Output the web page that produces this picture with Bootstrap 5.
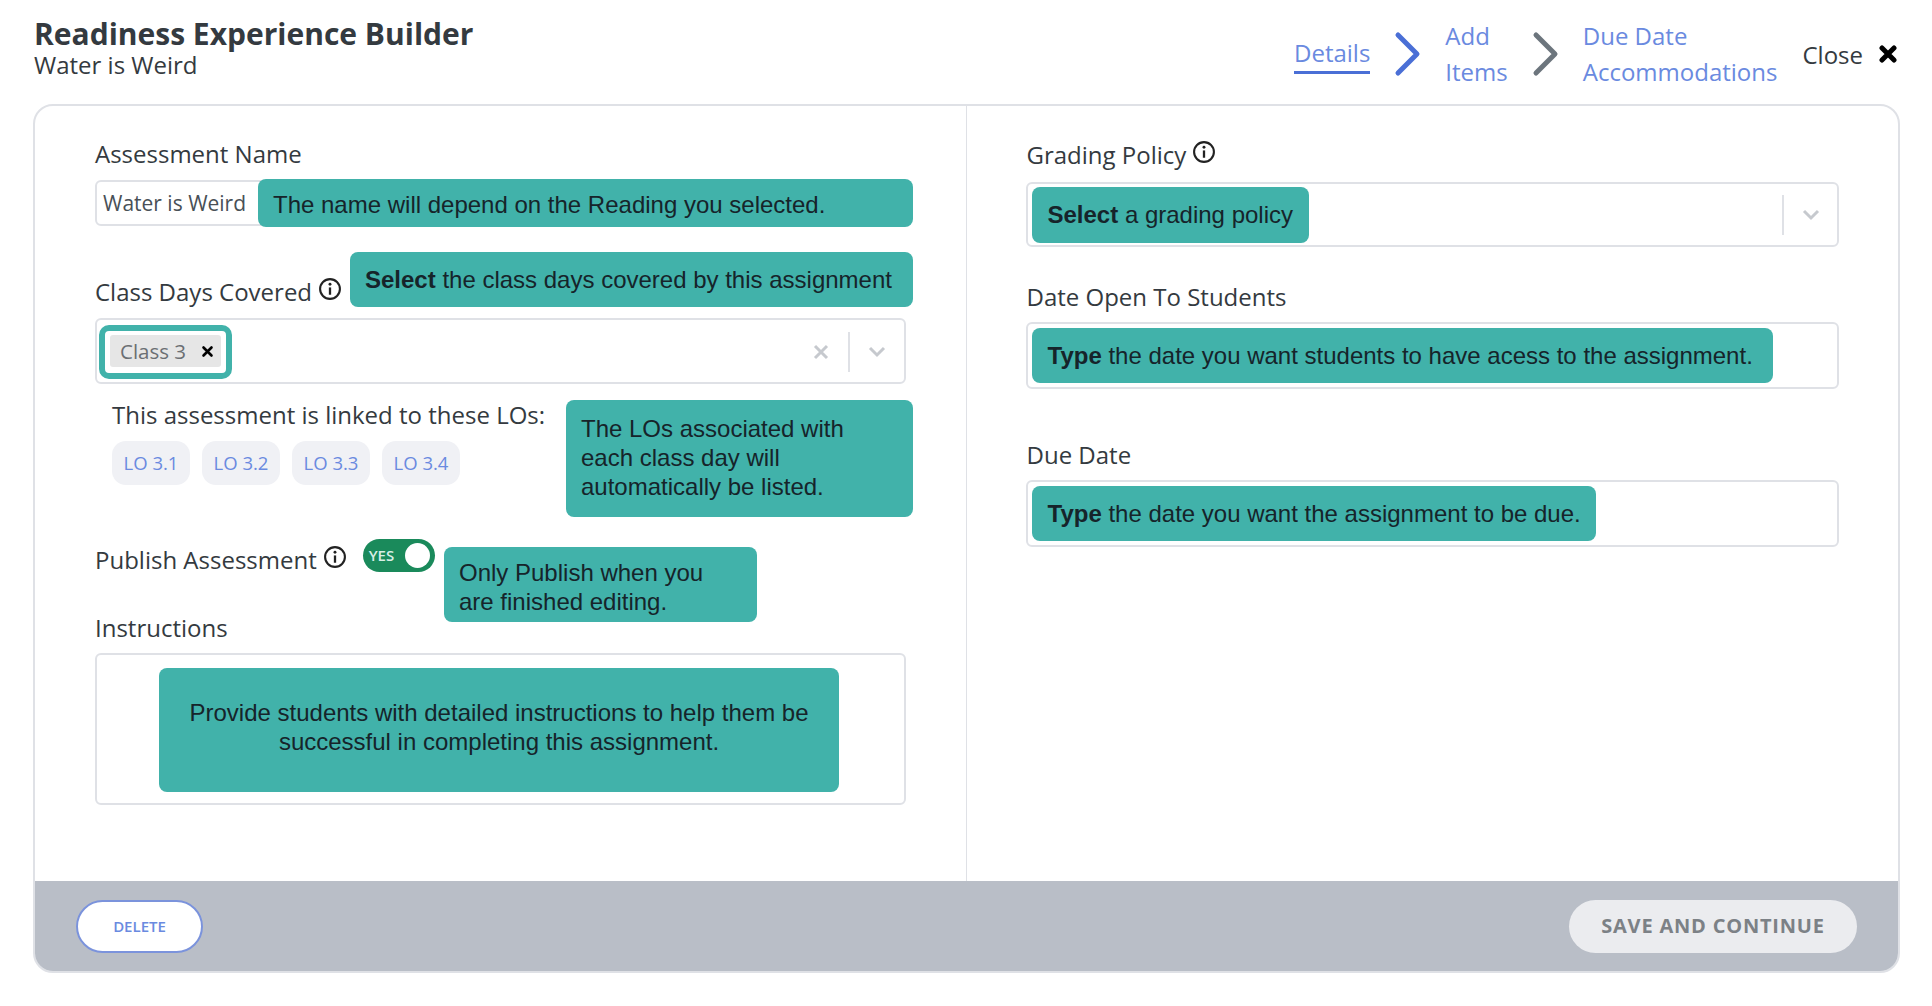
<!DOCTYPE html>
<html lang="en">
<head>
<meta charset="utf-8">
<title>Readiness Experience Builder</title>
<link href="https://cdn.jsdelivr.net/npm/bootstrap@5.3.0/dist/css/bootstrap.min.css" rel="stylesheet">
<style>
body{font-family:"Open Sans","Noto Sans",sans-serif;font-size:24px;color:#343a40;background:#fff;overflow:hidden}
.page-wrap{padding:0 32px 0 33px}
.top-bar{height:104px;padding-top:4px}
.title-block{align-self:flex-start;margin-top:13px;margin-left:1px}
.main-title{font-size:30px;line-height:33px;font-weight:700;color:#343a40;margin:0}
.sub-title{font-size:24px;line-height:30px}
.step-link{color:#6a8ae0;line-height:36px;text-decoration:none;display:block}
.step-active{border-bottom:3px solid #4a6fd6}
.step-chev{width:28px;height:46px;margin:0 24px}
.chev-first{margin-right:23px}
.chev-second{margin-right:23px}
.close-text{line-height:36px;margin-left:25px;margin-right:16px;position:relative;top:1px}
.close-ico{margin-right:3px}
.builder-card{height:869px;border:2px solid #dfe1e6;border-radius:20px;overflow:hidden}
.builder-body{height:775px}
.col-left{border-right:1px solid #dfe1e6;padding:30px 60px 0 60px}
.col-right{padding:31px 59px 0 59px}
.col-right .field-label{padding-left:1px}
.field-label{line-height:36px;white-space:nowrap}
.info-ico{width:24px;height:24px;margin-left:6px;position:relative;top:-3px;flex:none}
.name-row{margin-top:8px;height:46px}
.text-box{border:2px solid #dfe1e6;border-radius:6px;background:#fff}
.name-input{height:46px;font-size:21px;line-height:42px;padding-left:6px;color:#495057}
.callout{background:#41b2aa;border-radius:8px;color:#16242a;font-family:"Liberation Sans",Arial,sans-serif;font-size:24px;line-height:29px;padding:0 15px;white-space:normal}
.col-right .callout{padding:0 0 0 16px;white-space:nowrap}
.callout-over{position:absolute}
.co-name{left:163px;top:-1px;width:655px;height:48px;display:flex;align-items:center;padding-top:2px}
.days-row{margin-top:48px}
.co-days{left:255px;top:-22px;width:563px;height:55px;display:flex;align-items:center}
.days-box{margin-top:8px;height:66px;padding:6px 2px 4px}
.ring{border:6px solid #41b2aa;border-radius:10px;width:133px;height:54px;padding:4px 5px}
.chip-tag{background:#e6e6e6;border-radius:3px;height:32px;font-size:20.5px;color:#6b6f73;padding-left:10px}
.chip-x{width:13px;height:13px;margin-left:15px}
.sep-line{width:2px;height:40px;background:#dfe1e6}
.pick-x{width:16px;height:16px;margin-right:19px}
.pick-chev{width:18px;height:12px;margin:0 16px 0 18px}
.lo-row{margin-top:13px;padding-left:17px}
.lo-pill{background:#f0f1f5;border-radius:14px;height:44px;width:78px;font-size:18.5px;color:#6a8ae0}
.lo-list{margin-top:8px;gap:12px}
.co-los{left:471px;top:3px;width:347px;height:117px;padding-top:14px}
.pub-row{margin-top:57px}
.toggle-on{width:72px;height:33px;border-radius:17px;background:#1a8a5b;margin-left:16px;position:relative;top:-5px;color:#d9efe5;font-size:15px;font-weight:600;padding:0 5px 0 6px}
.toggle-dot{width:25px;height:25px;border-radius:50%;background:#fff}
.co-pub{left:349px;top:5px;width:313px;height:75px;display:flex;align-items:center;padding-top:4px}
.instr-row{margin-top:32px}
.instr-box{margin-top:7px;height:152px;padding-top:13px}
.co-instr{width:680px;height:124px;padding-top:30px;margin-left:62px;text-align:center}
.builder-foot{height:90px;background:#b9bec7;padding:0 41px}
.btn-del{width:127px;height:53px;background:#fff;border:2px solid #7b93dc;border-radius:27px;color:#6a8ae0;font-size:15px;font-weight:600;padding:0;--bs-btn-hover-bg:#fff;--bs-btn-hover-color:#6a8ae0;--bs-btn-hover-border-color:#7b93dc}
.btn-save{width:288px;height:53px;background:#ebecef;border:0;border-radius:27px;color:#7c8186;font-size:20px;font-weight:700;letter-spacing:.8px;padding:0;--bs-btn-hover-bg:#ebecef;--bs-btn-hover-color:#7c8186}
.right-next{margin-top:32px}
.right-last{margin-top:48px}
.grade-box{margin-top:9px;height:65px;padding:2px 4px}
.grade-box .pick-chev{margin-right:13px}
.co-grade{height:56px;width:277px;display:flex;align-items:center}
.date-box{margin-top:7px;height:67px;padding:4px}
.co-date{height:55px;display:flex;align-items:center}
.co-w1{width:741px}
.co-w2{width:564px}
</style>
</head>
<body>
<div class="page-wrap">
  <header class="top-bar d-flex justify-content-between align-items-center">
    <div class="title-block">
      <h1 class="main-title">Readiness Experience Builder</h1>
      <div class="sub-title">Water is Weird</div>
    </div>
    <nav class="d-flex align-items-center">
      <a href="#" class="step-link step-active">Details</a>
      <svg class="step-chev chev-first" viewBox="0 0 28 46"><polyline points="4,4 23,23 4,42" fill="none" stroke="#4a6fd6" stroke-width="5" stroke-linecap="round" stroke-linejoin="round"/></svg>
      <div><a href="#" class="step-link">Add</a><a href="#" class="step-link">Items</a></div>
      <svg class="step-chev chev-second" viewBox="0 0 28 46"><polyline points="4,4 23,23 4,42" fill="none" stroke="#6c757d" stroke-width="5" stroke-linecap="round" stroke-linejoin="round"/></svg>
      <div><a href="#" class="step-link">Due Date</a><a href="#" class="step-link">Accommodations</a></div>
      <span class="close-text">Close</span>
      <svg class="close-ico" width="18" height="18" viewBox="0 0 18 18"><path d="M3 3 15 15M15 3 3 15" stroke="#000" stroke-width="5" stroke-linecap="round"/></svg>
    </nav>
  </header>

  <main class="builder-card d-flex flex-column">
    <div class="row g-0 builder-body">
      <div class="col-6 col-left">
        <div class="field-label">Assessment Name</div>
        <div class="name-row position-relative">
          <div class="text-box name-input">Water is Weird</div>
          <div class="callout callout-over co-name">The name will depend on the Reading you selected.</div>
        </div>

        <div class="days-row position-relative d-flex align-items-center field-label">
          <span>Class Days Covered</span>
          <svg class="info-ico" viewBox="0 0 23 23"><circle cx="11.5" cy="11.5" r="9.5" fill="none" stroke="#222" stroke-width="2"/><circle cx="11.5" cy="7" r="1.4" fill="#222"/><rect x="10.4" y="10" width="2.2" height="7" fill="#222"/></svg>
          <div class="callout callout-over co-days"><span><b>Select</b> the class days covered by this assignment</span></div>
        </div>
        <div class="text-box days-box d-flex align-items-center">
          <div class="ring">
            <div class="chip-tag d-flex align-items-center"><span>Class 3</span><svg class="chip-x" viewBox="0 0 13 13"><path d="M2.5 2.5 10.5 10.5M10.5 2.5 2.5 10.5" stroke="#000" stroke-width="2.6" stroke-linecap="round"/></svg></div>
          </div>
          <svg class="pick-x ms-auto" viewBox="0 0 16 16"><path d="M2 2 14 14M14 2 2 14" stroke="#c6c9ce" stroke-width="3"/></svg>
          <div class="sep-line"></div>
          <svg class="pick-chev" viewBox="0 0 18 12"><polyline points="2,2 9,9 16,2" fill="none" stroke="#c6c9ce" stroke-width="3"/></svg>
        </div>

        <div class="lo-row position-relative">
          <div class="field-label">This assessment is linked to these LOs:</div>
          <div class="d-flex lo-list">
            <span class="lo-pill d-flex align-items-center justify-content-center">LO 3.1</span>
            <span class="lo-pill d-flex align-items-center justify-content-center">LO 3.2</span>
            <span class="lo-pill d-flex align-items-center justify-content-center">LO 3.3</span>
            <span class="lo-pill d-flex align-items-center justify-content-center">LO 3.4</span>
          </div>
          <div class="callout callout-over co-los">The LOs associated with each class day will automatically be listed.</div>
        </div>

        <div class="pub-row position-relative d-flex align-items-center field-label">
          <span>Publish Assessment</span>
          <svg class="info-ico" viewBox="0 0 23 23"><circle cx="11.5" cy="11.5" r="9.5" fill="none" stroke="#222" stroke-width="2"/><circle cx="11.5" cy="7" r="1.4" fill="#222"/><rect x="10.4" y="10" width="2.2" height="7" fill="#222"/></svg>
          <div class="toggle-on d-flex align-items-center justify-content-between"><span>YES</span><span class="toggle-dot"></span></div>
          <div class="callout callout-over co-pub">Only Publish when you are finished editing.</div>
        </div>

        <div class="instr-row field-label">Instructions</div>
        <div class="text-box instr-box">
          <div class="callout co-instr">Provide students with detailed instructions to help them be successful in completing this assignment.</div>
        </div>
      </div>

      <div class="col-6 col-right">
        <div class="d-flex align-items-center field-label">
          <span>Grading Policy</span>
          <svg class="info-ico" viewBox="0 0 23 23"><circle cx="11.5" cy="11.5" r="9.5" fill="none" stroke="#222" stroke-width="2"/><circle cx="11.5" cy="7" r="1.4" fill="#222"/><rect x="10.4" y="10" width="2.2" height="7" fill="#222"/></svg>
        </div>
        <div class="text-box grade-box d-flex align-items-center">
          <div class="callout co-grade"><span><b>Select</b> a grading policy</span></div>
          <div class="sep-line ms-auto"></div>
          <svg class="pick-chev" viewBox="0 0 18 12"><polyline points="2,2 9,9 16,2" fill="none" stroke="#c6c9ce" stroke-width="3"/></svg>
        </div>

        <div class="field-label right-next">Date Open To Students</div>
        <div class="text-box date-box">
          <div class="callout co-date co-w1"><span><b>Type</b> the date you want students to have acess to the assignment.</span></div>
        </div>

        <div class="field-label right-last">Due Date</div>
        <div class="text-box date-box">
          <div class="callout co-date co-w2"><span><b>Type</b> the date you want the assignment to be due.</span></div>
        </div>
      </div>
    </div>
    <footer class="builder-foot d-flex justify-content-between align-items-center">
      <button type="button" class="btn btn-del">DELETE</button>
      <button type="button" class="btn btn-save">SAVE AND CONTINUE</button>
    </footer>
  </main>
</div>
</body>
</html>
